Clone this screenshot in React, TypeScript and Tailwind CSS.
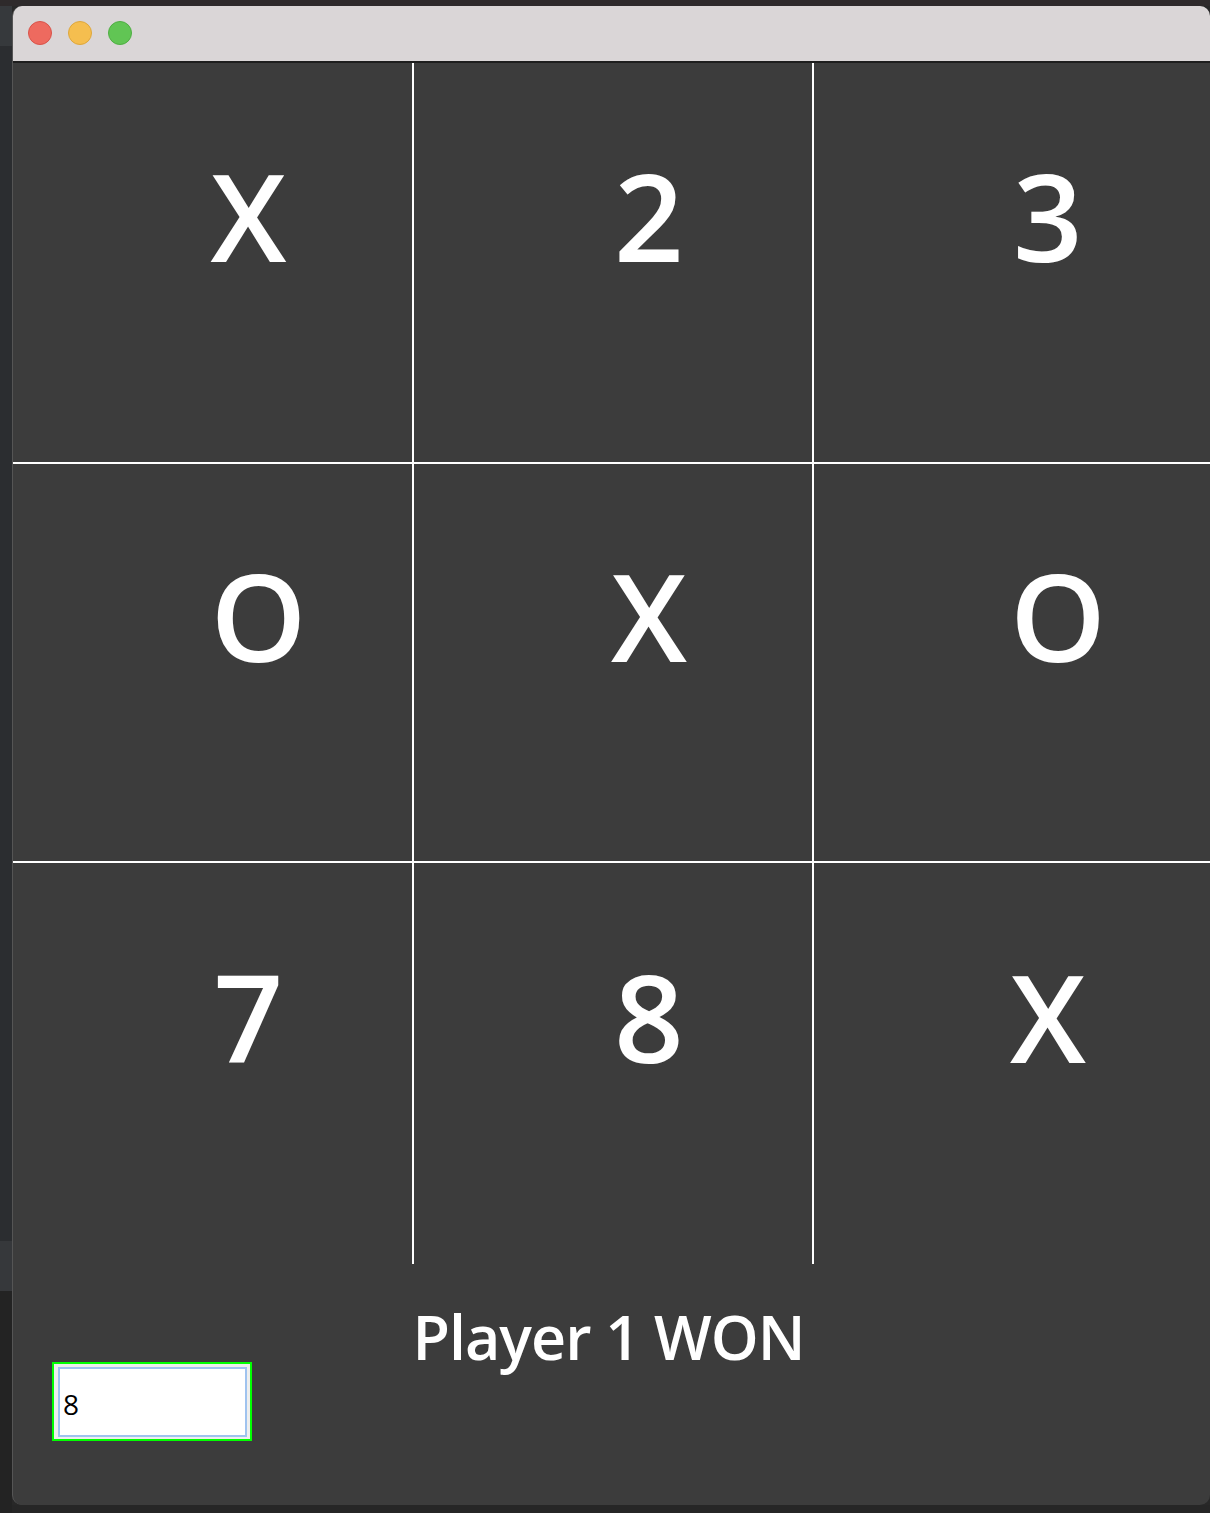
export default function App() {
  const cells = ['X', '2', '3', 'O', 'X', 'O', '7', '8', 'X'];

  return (
    <div className="w-[1210px] h-[1513px] bg-[#282828] flex overflow-hidden" style={{ fontFamily: '"Open Sans", "Noto Sans", sans-serif' }}>
      {/* editor strip behind the window */}
      <div className="w-[12px] shrink-0 flex flex-col">
        <div className="h-[6px] bg-[#2e2a2b]" />
        <div className="h-[40px] bg-[#36393c]" />
        <div className="h-[1195px] bg-[#2b2d30]" />
        <div className="h-[50px] bg-[#36383b]" />
        <div className="flex-1 bg-[#232323]" />
      </div>

      <div className="flex-1 flex flex-col">
        <div className="h-[6px] bg-[#2e2a2b]" />
        <div className="w-[1198px] h-[1499px] flex flex-col rounded-[10px] overflow-hidden bg-[#3c3c3c] border-l border-[#555555]">
          {/* title bar */}
          <div className="h-[57px] shrink-0 bg-[#dad6d7] border-b-2 border-[#1e1e1e] flex items-center gap-[16px] pl-[15px] pb-[2px]">
            <span className="w-[24px] h-[24px] rounded-full bg-[#ee6a5f] border border-[#d9534a]" />
            <span className="w-[24px] h-[24px] rounded-full bg-[#f5be4f] border border-[#dea73c]" />
            <span className="w-[24px] h-[24px] rounded-full bg-[#61c554] border border-[#4fae43]" />
          </div>

          {/* board */}
          <div className="grid grid-cols-[399px_398px_1fr] grid-rows-[399px_397px_401px] gap-[2px] bg-white">
            {cells.map((c, i) => (
              <div key={i} className="bg-[#3c3c3c] flex items-center justify-center pl-[72px] pb-[96px]">
                <span className={c === 'O' ? 'ml-[20px] text-[122px] leading-none font-semibold text-white' : 'text-[122px] leading-none font-semibold text-white'}>
                  {c}
                </span>
              </div>
            ))}
          </div>

          {/* status area */}
          <div className="flex-1 flex flex-col pt-[42px]">
            <div className="h-[56px] text-center text-[61px] leading-none font-semibold tracking-[-1px] text-white pr-[6px]">Player 1 WON</div>
            <div className="ml-[39px] w-[200px] h-[79px] border-2 border-[#00ff00] bg-[#eeeeee] pl-[4px] pt-[3px] pr-[3px] pb-[2px]">
              <div className="w-full h-full bg-white border-2 border-[#9fc3ef] flex items-center pl-[3px] pt-[4px]">
                <span className="text-[28px] text-black leading-none">8</span>
              </div>
            </div>
          </div>
        </div>
        <div className="flex-1 bg-[#262626]" />
      </div>
    </div>
  );
}
